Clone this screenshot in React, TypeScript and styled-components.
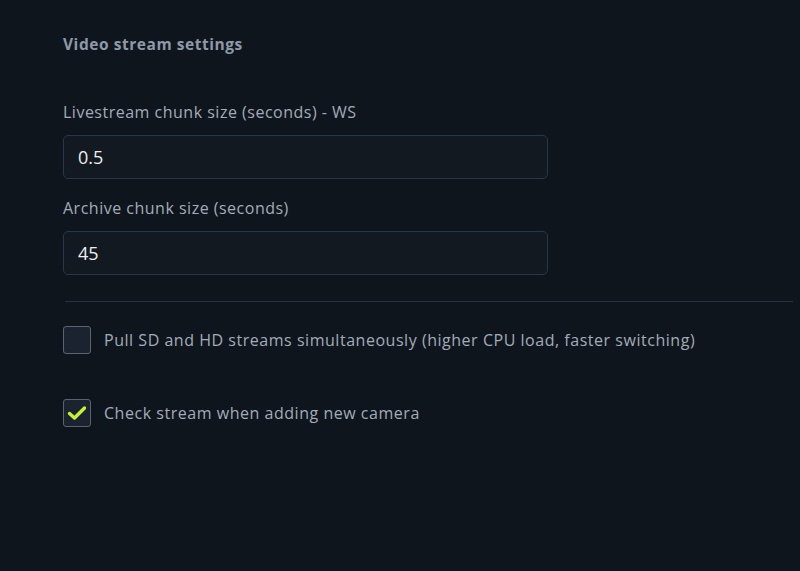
import { useState } from 'react'
import styled, { createGlobalStyle } from 'styled-components'

const GlobalStyle = createGlobalStyle`
  html, body {
    margin: 0;
    padding: 0;
    background: #0f151d;
  }
  body {
    font-family: 'Open Sans', 'Liberation Sans', sans-serif;
  }
`

const Page = styled.div`
  width: 800px;
  height: 571px;
  box-sizing: border-box;
  padding: 35px 7px 0 63px;
  background: #0f151d;
  overflow: hidden;
`

const SectionTitle = styled.h2`
  margin: 0;
  font-size: 15.5px;
  font-weight: 700;
  color: #8e99a7;
  line-height: 18px;
  letter-spacing: 0.55px;
`

const Form = styled.div`
  display: flex;
  flex-direction: column;
  margin-top: 50px;
  gap: 20px;
`

const Field = styled.label`
  display: flex;
  flex-direction: column;
  gap: 14px;
`

const FieldLabel = styled.span`
  font-size: 16px;
  line-height: 18px;
  color: #a3acb8;
  letter-spacing: 0.5px;
`

const TextInput = styled.input`
  box-sizing: border-box;
  width: 485px;
  height: 44px;
  padding: 0 14px;
  border: 1px solid #2a3545;
  border-radius: 5px;
  background: #131921;
  color: #eceef1;
  font-family: inherit;
  font-size: 18px;
  outline: none;
`

const Divider = styled.hr`
  margin: 26px 0 0 2px;
  border: none;
  border-top: 1px solid #263242;
  width: 728px;
`

const CheckRow = styled.label<{ $top: number }>`
  display: flex;
  align-items: center;
  gap: 13px;
  margin-top: ${(p) => p.$top}px;
  cursor: pointer;
`

const Box = styled.span`
  box-sizing: border-box;
  width: 28px;
  height: 28px;
  border: 1px solid #5b636e;
  border-radius: 3px;
  background: #1b2330;
  display: flex;
  align-items: center;
  justify-content: center;
`

const CheckText = styled.span`
  font-size: 16px;
  color: #a3acb8;
  letter-spacing: 0.53px;
`

function Checkbox({ checked, top, label }: { checked: boolean; top: number; label: string }) {
  const [on, setOn] = useState(checked)
  return (
    <CheckRow $top={top} onClick={() => setOn(!on)}>
      <Box>
        {on && (
          <svg width="20" height="16" viewBox="0 0 20 16">
            <path
              d="M2.5 8.5 L7.5 13 L17.5 3"
              fill="none"
              stroke="#c5f233"
              strokeWidth="3.4"
              strokeLinecap="round"
              strokeLinejoin="round"
            />
          </svg>
        )}
      </Box>
      <CheckText>{label}</CheckText>
    </CheckRow>
  )
}

export default function App() {
  return (
    <Page>
      <GlobalStyle />
      <SectionTitle>Video stream settings</SectionTitle>
      <Form>
        <Field>
          <FieldLabel>Livestream chunk size (seconds) - WS</FieldLabel>
          <TextInput defaultValue="0.5" />
        </Field>
        <Field>
          <FieldLabel>Archive chunk size (seconds)</FieldLabel>
          <TextInput defaultValue="45" />
        </Field>
      </Form>
      <Divider />
      <Checkbox
        checked={false}
        top={24}
        label="Pull SD and HD streams simultaneously (higher CPU load, faster switching)"
      />
      <Checkbox checked top={45} label="Check stream when adding new camera" />
    </Page>
  )
}
